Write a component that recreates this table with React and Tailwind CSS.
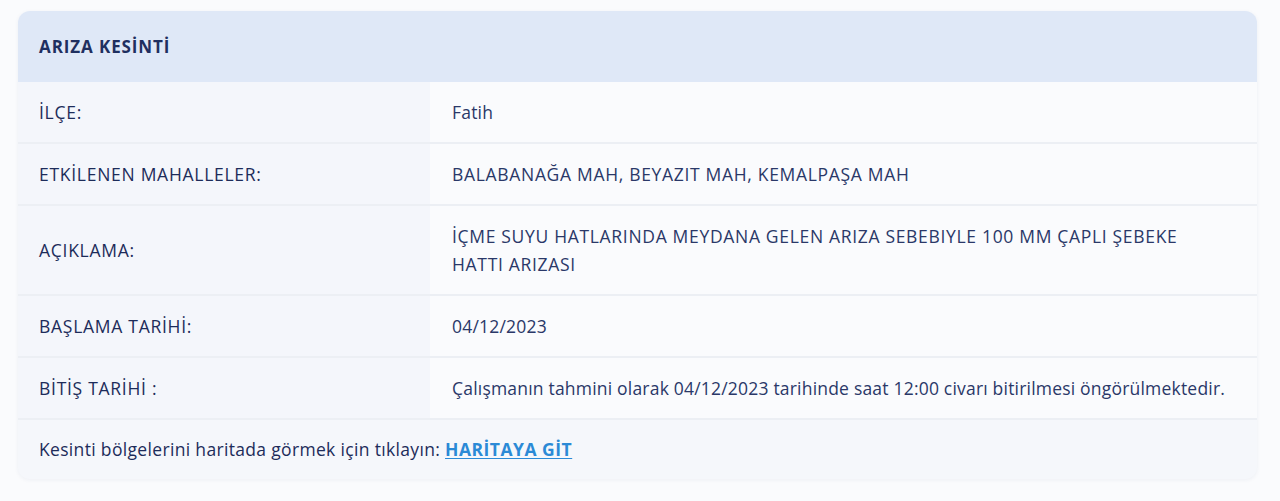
import React from "react";

const rows = [
  { label: "İLÇE:", value: "Fatih", upper: false },
  { label: "ETKİLENEN MAHALLELER:", value: "BALABANAĞA MAH, BEYAZIT MAH, KEMALPAŞA MAH", upper: true },
  {
    label: "AÇIKLAMA:",
    upper: true,
    value: (
      <>
        İÇME SUYU HATLARINDA MEYDANA GELEN ARIZA SEBEBIYLE 100 MM ÇAPLI ŞEBEKE
        <br />
        HATTI ARIZASI
      </>
    ),
  },
  { label: "BAŞLAMA TARİHİ:", value: "04/12/2023", upper: false },
  {
    label: "BİTİŞ TARİHİ :",
    upper: false,
    value: "Çalışmanın tahmini olarak 04/12/2023 tarihinde saat 12:00 civarı bitirilmesi öngörülmektedir.",
  },
];

export default function App() {
  return (
    <div
      className="min-h-[501px] w-full bg-[#fafbfd] pt-[11px] pl-[18px] pr-[23px] text-[#1f2e5c]"
      style={{ fontFamily: "'Open Sans', 'Noto Sans', sans-serif" }}
    >
      <div className="overflow-hidden rounded-[12px] bg-[#f5f7fb] shadow-[0_1px_4px_rgba(30,50,100,0.06)]">
        <div className="flex h-[71px] items-center bg-[#dfe8f7] px-[21px] text-[17px] font-bold tracking-[0.9px] text-[#1f2f60]">
          ARIZA KESİNTİ
        </div>
        {rows.map((r, i) => (
          <div key={i} className="flex border-b-2 border-[#eceff4] text-[17.5px] leading-[28px]">
            <div className="flex w-[412px] shrink-0 items-center bg-[#f4f6fb] py-[16px] pl-[21px] font-medium tracking-[0.72px] text-[#1d2c5a]">
              {r.label}
            </div>
            <div
              className={
                r.upper
                  ? "flex-1 bg-[#fafbfd] py-[16px] pl-[22px] pr-[20px] tracking-[0.68px] text-[#2a3868]"
                  : "flex-1 bg-[#fafbfd] py-[16px] pl-[22px] pr-[20px] tracking-[0.2px] text-[#2a3868]"
              }
            >
              {r.value}
            </div>
          </div>
        ))}
        <div className="flex h-[59px] items-center px-[21px] text-[17.5px]">
          <span className="font-medium tracking-[0.33px] text-[#1d2c5a]">
            Kesinti bölgelerini haritada görmek için tıklayın:&nbsp;
          </span>
          <a href="#" className="font-bold tracking-[0.5px] text-[#2b8ad6] underline underline-offset-2">
            HARİTAYA GİT
          </a>
        </div>
      </div>
    </div>
  );
}
